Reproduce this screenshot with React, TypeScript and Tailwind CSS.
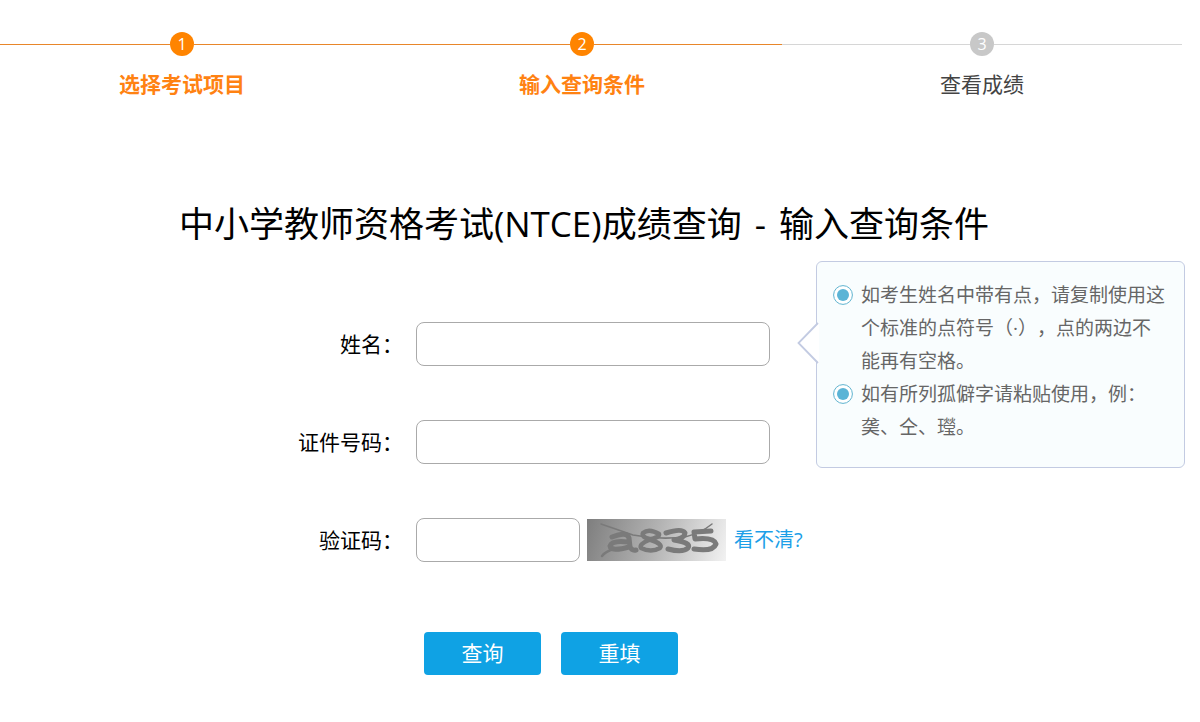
import { useState, type FormEvent, type ReactNode } from "react";

const steps = [
  { label: "选择考试项目", active: true },
  { label: "输入查询条件", active: true },
  { label: "查看成绩", active: false },
];

function Steps() {
  return (
    <ol className="-ml-[18px] mr-[18px] flex pt-8">
      {steps.map((step, i) => (
        <li key={step.label} className="flex flex-1 flex-col items-center">
          <div className="flex w-full items-center">
            <span className={step.active ? "h-px flex-1 bg-[#e8862a]" : "h-px flex-1 bg-[#d6d6d6]"} />
            <span
              className={
                step.active
                  ? "flex size-6 items-center justify-center rounded-full bg-[#ff8400] text-base leading-6 font-medium text-white"
                  : "flex size-6 items-center justify-center rounded-full bg-[#c8c8c8] text-base leading-6 font-medium text-white"
              }
            >
              {i + 1}
            </span>
            <span className={step.active ? "h-px flex-1 bg-[#e8862a]" : "h-px flex-1 bg-[#d6d6d6]"} />
          </div>
          <span
            className={
              step.active
                ? "mt-3 text-[21px] leading-8 font-bold text-[#ff8212]"
                : "mt-3 text-[21px] leading-8 text-[#444]"
            }
          >
            {step.label}
          </span>
        </li>
      ))}
    </ol>
  );
}

function Row({ id, label, children }: { id: string; label: string; children: ReactNode }) {
  return (
    <div className="flex items-center">
      <label htmlFor={id} className="w-[403px] shrink-0 text-right text-[21px] leading-8 text-black">
        {label}：
      </label>
      <div className="ml-[13px] flex items-center">{children}</div>
    </div>
  );
}

function Captcha() {
  return (
    <svg className="ml-[7px] h-[42px] w-[139px]" viewBox="0 0 139 42" role="img" aria-label="验证码">
      <defs>
        <linearGradient id="shade" x1="0" y1="0" x2="139" y2="42" gradientUnits="userSpaceOnUse">
          <stop offset="0" stopColor="#7e7e7e" />
          <stop offset="0.5" stopColor="#b4b4b4" />
          <stop offset="1" stopColor="#f2f2f2" />
        </linearGradient>
      </defs>
      <rect width="139" height="42" fill="url(#shade)" />
      <g fill="none" stroke="#7a7a7a" strokeLinecap="round" strokeLinejoin="round">
        <path d="M14 5 L46 16 Q72 21 98 18 Q114 14 125 5" strokeWidth="1.5" />
        <path d="M15 37 Q18 33 26 30" strokeWidth="2.5" />
        <path d="M25 18 Q40 12 42 19 L43 28 Q45 32 49 31 M41 23 Q25 21 23 27 Q24 33 42 28" strokeWidth="5" />
        <path d="M72 15 Q62 9 56 14 Q54 18 64 21 Q76 25 73 29 Q64 34 54 29 Q52 25 62 21 Q73 18 72 15Z" strokeWidth="4.5" />
        <path d="M79 14 Q95 9 98 14 Q98 19 87 21 Q105 24 101 29 Q96 34 81 30" strokeWidth="5" />
        <path d="M124 12 L107 13 L108 20 Q127 18 129 25 Q126 33 107 30" strokeWidth="5" />
      </g>
    </svg>
  );
}

function Bullet() {
  return (
    <svg className="mt-[6px] size-5 shrink-0" viewBox="0 0 20 20" aria-hidden="true">
      <circle cx="10" cy="10" r="9.4" fill="#fff" stroke="#5fb3cf" strokeWidth="1" />
      <circle cx="10" cy="10" r="6" fill="#5bb4d6" />
    </svg>
  );
}

function Hint() {
  return (
    <aside className="absolute top-[-61px] left-[816px] w-[369px] rounded-md border border-[#c3cbe2] bg-[#f9fdfe] pt-[17px] pr-[14px] pb-[23px] pl-4 text-[19px] leading-[33px] text-[#666] [text-spacing-trim:space-all]">
      <svg className="absolute top-[60px] left-[-20px] h-[42px] w-[22px]" viewBox="0 0 22 42" aria-hidden="true">
        <path d="M22 0 L1.5 21 L22 42Z" fill="#fff" />
        <path d="M21 1 L1.5 21 L21 41" fill="none" stroke="#c3cbe2" strokeWidth="1.8" />
      </svg>
      <ul>
        <li className="flex gap-2">
          <Bullet />
          <span>
            如考生姓名中带有点，请复制使用这
            <br />
            个标准的点符号（·），点的两边不
            <br />
            能再有空格。
          </span>
        </li>
        <li className="flex gap-2">
          <Bullet />
          <span>
            如有所列孤僻字请粘贴使用，例：
            <br />
            䶮、仝、㼆。
          </span>
        </li>
      </ul>
    </aside>
  );
}

export default function App() {
  const [name, setName] = useState("");
  const [idNumber, setIdNumber] = useState("");
  const [code, setCode] = useState("");

  const reset = () => {
    setName("");
    setIdNumber("");
    setCode("");
  };

  return (
    <main className="overflow-x-hidden bg-white pb-12 font-['Open_Sans','Noto_Sans_CJK_SC',sans-serif]">
      <Steps />
      <h1 className="mt-24 mr-8 text-center text-[35px] leading-[56px] text-black">
        中小学教师资格考试(NTCE)成绩查询 <span className="mx-1">-</span> 输入查询条件
      </h1>
      <form
        className="relative mt-[70px]"
        onSubmit={(e: FormEvent) => e.preventDefault()}
        onReset={reset}
      >
        <div className="flex flex-col gap-[54px]">
          <Row id="name" label="姓名">
            <input
              id="name"
              value={name}
              onChange={(e) => setName(e.target.value)}
              className="h-11 w-[354px] rounded-lg border border-[#aaa] bg-white px-3 text-lg"
            />
          </Row>
          <Row id="id-number" label="证件号码">
            <input
              id="id-number"
              value={idNumber}
              onChange={(e) => setIdNumber(e.target.value)}
              className="h-11 w-[354px] rounded-lg border border-[#aaa] bg-white px-3 text-lg"
            />
          </Row>
          <Row id="code" label="验证码">
            <input
              id="code"
              value={code}
              onChange={(e) => setCode(e.target.value)}
              className="h-11 w-[164px] rounded-lg border border-[#aaa] bg-white px-3 text-lg"
            />
            <Captcha />
            <a href="#code" className="ml-2 text-[20px] leading-8 text-[#1c9fe8]">
              看不清?
            </a>
          </Row>
        </div>
        <div className="mt-[70px] ml-[424px] flex gap-5">
          <button type="submit" className="h-[43px] w-[117px] rounded-[4px] bg-[#0fa2e4] text-[21px] text-white">
            查询
          </button>
          <button type="reset" className="h-[43px] w-[117px] rounded-[4px] bg-[#0fa2e4] text-[21px] text-white">
            重填
          </button>
        </div>
        <Hint />
      </form>
    </main>
  );
}
